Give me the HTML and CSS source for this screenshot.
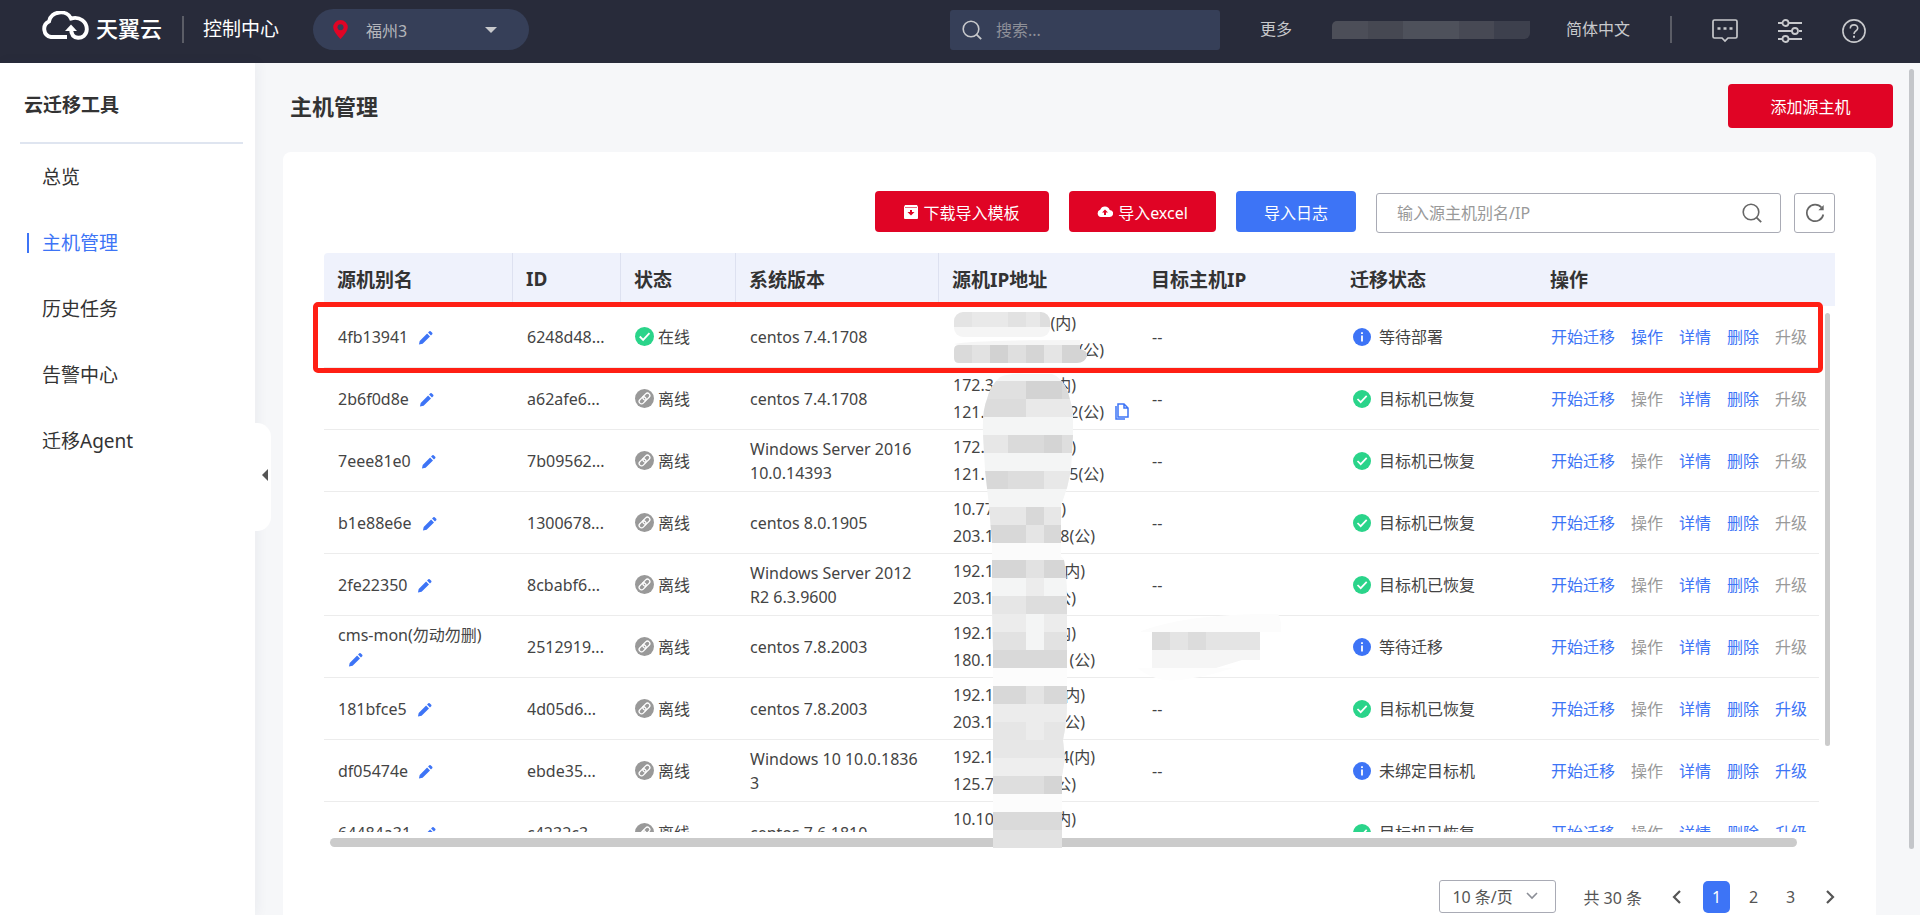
FILE: index.html
```
<!DOCTYPE html>
<html lang="zh-CN">
<head>
	<meta charset="utf-8">
	<title>主机管理</title>
	<meta name="viewport" content="width=device-width, initial-scale=1" />
	<link rel="stylesheet" href="styles.css">
</head>
<body>
	<svg class="sprite" aria-hidden="true">
		<symbol id="i-pencil" viewBox="0 0 16 16"><path d="M1 15l.8-3.9 7.900-7.900 3.100 3.100-7.900 7.900zM10.700 2.200l1.400-1.400q.7-.6 1.400 0l1.700 1.700q.6.7 0 1.400l-1.400 1.400z" fill="#3d74f6"/></symbol>
		<symbol id="i-ok" viewBox="0 0 18 18"><circle cx="9" cy="9" r="9" fill="#2ad48a"/><path d="M4.500 9l3.200 3.200 6-6.400" fill="none" stroke="#fff" stroke-width="1.700"/></symbol>
		<symbol id="i-info" viewBox="0 0 18 18"><circle cx="9" cy="9" r="9" fill="#3d74f6"/><path d="M9 4.200v1.800M9 7.400v6" stroke="#fff" stroke-width="1.800"/></symbol>
		<symbol id="i-off" viewBox="0 0 18 18"><circle cx="9" cy="9" r="9" fill="#999"/><g fill="none" stroke="#fff" stroke-width="1.200" transform="rotate(-45 9 9)"><rect x="2.800" y="6.700" width="7.400" height="4.600" rx="2.300"/><rect x="7.800" y="6.700" width="7.400" height="4.600" rx="2.300"/></g></symbol>
		<symbol id="i-search" viewBox="0 0 20 20"><circle cx="9" cy="9" r="7.800" fill="none" stroke="currentColor" stroke-width="1.600"/><path d="M14.600 14.600l4.600 4.600" stroke="currentColor" stroke-width="1.800"/></symbol>
	</svg>

	<header class="topbar">
		<a class="logo" href="#">
			<svg width="49" height="30" viewBox="0 0 49 30" aria-hidden="true"><path d="M27 26H11A8.200 8.200 0 0 1 9 10.500C11 -.5 27 -1.500 31 7.500C40 5 47 11 46.800 18.500C46.500 24.500 42 27 38 26.800C33 26.500 31 23 31 17" fill="none" stroke="#fff" stroke-width="3.900"/><path d="M25 20L31 13.500l6 6.500z" fill="#fff"/></svg>
			<span>天翼云</span>
		</a>
		<span class="divider"></span>
		<a class="console" href="#">控制中心</a>
		<button class="region" type="button">
			<svg width="15" height="19" viewBox="0 0 15 19" aria-hidden="true"><path d="M7.500 0a7.300 7.300 0 0 1 7.300 7.300C14.800 12 7.500 19 7.500 19S.2 12 .2 7.300A7.300 7.300 0 0 1 7.500 0z" fill="#e00425"/><circle cx="7.500" cy="7.300" r="3" fill="#363f58"/></svg>
			<span>福州3</span>
			<i class="caret"></i>
		</button>
		<div class="top-right">
			<label class="top-search">
				<svg width="20" height="20"><use href="#i-search"/></svg>
				<input type="text" placeholder="搜索..." aria-label="搜索">
			</label>
			<a class="text" href="#">更多</a>
			<span class="account"></span>
			<a class="text" href="#">简体中文</a>
			<span class="divider"></span>
			<a class="icon" href="#" aria-label="消息"><svg width="26" height="24" viewBox="0 0 26 24"><path d="M2.500 1h21q1.500 0 1.500 1.500v15q0 1.500-1.500 1.500H16l-3 3-3-3H2.500Q1 19 1 17.500v-15Q1 1 2.500 1z" fill="none" stroke="currentColor" stroke-width="1.700"/><path d="M5.500 9.500h3M11.500 9.500h3M17.500 9.500h3" stroke="currentColor" stroke-width="2.600"/></svg></a>
			<a class="icon" href="#" aria-label="设置"><svg width="24" height="24" viewBox="0 0 24 24"><g fill="none" stroke="currentColor" stroke-width="1.800"><path d="M0 4h4M11 4h13M0 12h14M21 12h3M0 20h4M11 20h13"/><circle cx="7.500" cy="4" r="3"/><circle cx="17" cy="12" r="3"/><circle cx="7.500" cy="20" r="3"/></g></svg></a>
			<a class="icon" href="#" aria-label="帮助"><svg width="24" height="24" viewBox="0 0 24 24"><g fill="none" stroke="currentColor" stroke-width="1.600"><circle cx="12" cy="12" r="11.100"/><path d="M8.300 9.500c0-5 7.500-4.700 7.400-.3 0 2.800-3.700 2.700-3.700 5.800"/><path d="M12 16.800v2" stroke-width="2"/></g></svg></a>
		</div>
	</header>

	<div class="page">
		<nav class="sidebar">
			<h2>云迁移工具</h2>
			<ul>
				<li><a href="#">总览</a></li>
				<li><a class="active" href="#">主机管理</a></li>
				<li><a href="#">历史任务</a></li>
				<li><a href="#">告警中心</a></li>
				<li><a href="#">迁移Agent</a></li>
			</ul>
			<button class="fold" type="button" aria-label="收起"><i></i></button>
		</nav>

		<main>
			<div class="title-row">
				<h1>主机管理</h1>
				<button class="btn btn-red btn-add" type="button">添加源主机</button>
			</div>

			<section class="card">
				<div class="toolbar">
					<button class="btn btn-red btn-tpl" type="button"><svg width="14" height="14" viewBox="0 0 14 14"><path d="M1 0h12l1 2v11q0 1-1 1H1q-1 0-1-1V2z" fill="#fff"/><path d="M1 2.500h12" stroke="#e00425" stroke-width=".6"/><path d="M6 5h2v2h2.500L7 10.500 3.500 7H6z" fill="#e00425"/></svg>下载导入模板</button>
					<button class="btn btn-red btn-excel" type="button"><svg width="16" height="11" viewBox="0 0 16 11"><path d="M4 11a3.700 3.700 0 0 1-.8-7.200A5 5 0 0 1 12.700 4 3.500 3.500 0 0 1 12.500 11z" fill="#fff"/><path d="M7 9V6.500H5L8 3.500l3 3H9V9z" fill="#e00425"/></svg>导入excel</button>
					<button class="btn btn-blue" type="button">导入日志</button>
					<label class="filter">
						<input type="text" placeholder="输入源主机别名/IP" aria-label="输入源主机别名/IP">
						<svg width="20" height="20"><use href="#i-search"/></svg>
					</label>
					<button class="refresh" type="button" aria-label="刷新"><svg width="20" height="20" viewBox="0 0 20 20"><path d="M16.500 4.500A8.300 8.300 0 1 0 18.300 11.500" fill="none" stroke="currentColor" stroke-width="1.700"/><path d="M18.700 2v5.300h-5.300z" fill="currentColor"/></svg></button>
				</div>

				<div class="table-area">
					<div class="table-clip">
						<table>
							<colgroup>
								<col class="c-name"><col class="c-id"><col class="c-state"><col class="c-os"><col class="c-ip"><col class="c-target"><col class="c-mig"><col class="c-ops"><col class="c-gutter">
							</colgroup>
							<thead>
								<tr><th class="sep">源机别名</th><th class="sep">ID</th><th class="sep">状态</th><th class="sep">系统版本</th><th>源机IP地址</th><th>目标主机IP</th><th>迁移状态</th><th>操作</th><th></th></tr>
							</thead>
							<tbody>
								<tr>
									<td>4fb13941<svg class="edit"><use href="#i-pencil"/></svg></td>
									<td>6248d48...</td>
									<td><span class="state on"><svg><use href="#i-ok"/></svg>在线</span></td>
									<td>centos 7.4.1708</td>
									<td><div class="ip d13"><i></i>(内)</div><div class="ip d16"><i></i>(公)</div></td>
									<td>--</td>
									<td><span class="mig"><svg><use href="#i-info"/></svg>等待部署</span></td>
									<td><div class="ops"><a href="#">开始迁移</a><a href="#">操作</a><a href="#">详情</a><a href="#">删除</a><a class="off">升级</a></div></td>
								</tr>
								<tr>
									<td>2b6f0d8e<svg class="edit"><use href="#i-pencil"/></svg></td>
									<td>a62afe6...</td>
									<td><span class="state"><svg><use href="#i-off"/></svg>离线</span></td>
									<td>centos 7.4.1708</td>
									<td><div class="ip d13"><span>172.3</span>(内)</div><div class="ip d16"><span>121.</span>2(公)<svg class="copy" viewBox="0 0 14 17"><path d="M3 1h6l4 4v9H3zM9 1v4h4M1 3v13h9" fill="none" stroke="#3d74f6" stroke-width="1.500"/></svg></div></td>
									<td>--</td>
									<td><span class="mig"><svg><use href="#i-ok"/></svg>目标机已恢复</span></td>
									<td><div class="ops"><a href="#">开始迁移</a><a class="off">操作</a><a href="#">详情</a><a href="#">删除</a><a class="off">升级</a></div></td>
								</tr>
								<tr>
									<td>7eee81e0<svg class="edit"><use href="#i-pencil"/></svg></td>
									<td>7b09562...</td>
									<td><span class="state"><svg><use href="#i-off"/></svg>离线</span></td>
									<td>Windows Server 2016 10.0.14393</td>
									<td><div class="ip d13"><span>172.</span>)</div><div class="ip d16"><span>121.</span>5(公)</div></td>
									<td>--</td>
									<td><span class="mig"><svg><use href="#i-ok"/></svg>目标机已恢复</span></td>
									<td><div class="ops"><a href="#">开始迁移</a><a class="off">操作</a><a href="#">详情</a><a href="#">删除</a><a class="off">升级</a></div></td>
								</tr>
								<tr>
									<td>b1e88e6e<svg class="edit"><use href="#i-pencil"/></svg></td>
									<td>1300678...</td>
									<td><span class="state"><svg><use href="#i-off"/></svg>离线</span></td>
									<td>centos 8.0.1905</td>
									<td><div class="ip d12"><span>10.77</span>)</div><div class="ip d15"><span>203.1</span>8(公)</div></td>
									<td>--</td>
									<td><span class="mig"><svg><use href="#i-ok"/></svg>目标机已恢复</span></td>
									<td><div class="ops"><a href="#">开始迁移</a><a class="off">操作</a><a href="#">详情</a><a href="#">删除</a><a class="off">升级</a></div></td>
								</tr>
								<tr>
									<td>2fe22350<svg class="edit"><use href="#i-pencil"/></svg></td>
									<td>8cbabf6...</td>
									<td><span class="state"><svg><use href="#i-off"/></svg>离线</span></td>
									<td>Windows Server 2012 R2 6.3.9600</td>
									<td><div class="ip d14"><span>192.1</span>内)</div><div class="ip d13"><span>203.1</span>公)</div></td>
									<td>--</td>
									<td><span class="mig"><svg><use href="#i-ok"/></svg>目标机已恢复</span></td>
									<td><div class="ops"><a href="#">开始迁移</a><a class="off">操作</a><a href="#">详情</a><a href="#">删除</a><a class="off">升级</a></div></td>
								</tr>
								<tr>
									<td>cms-mon(勿动勿删)<svg class="edit"><use href="#i-pencil"/></svg></td>
									<td>2512919...</td>
									<td><span class="state"><svg><use href="#i-off"/></svg>离线</span></td>
									<td>centos 7.8.2003</td>
									<td><div class="ip d13"><span>192.1</span>内)</div><div class="ip d15"><span>180.1</span>(公)</div></td>
									<td></td>
									<td><span class="mig"><svg><use href="#i-info"/></svg>等待迁移</span></td>
									<td><div class="ops"><a href="#">开始迁移</a><a class="off">操作</a><a href="#">详情</a><a href="#">删除</a><a class="off">升级</a></div></td>
								</tr>
								<tr>
									<td>181bfce5<svg class="edit"><use href="#i-pencil"/></svg></td>
									<td>4d05d6...</td>
									<td><span class="state"><svg><use href="#i-off"/></svg>离线</span></td>
									<td>centos 7.8.2003</td>
									<td><div class="ip d14"><span>192.1</span>内)</div><div class="ip d14"><span>203.1</span>公)</div></td>
									<td>--</td>
									<td><span class="mig"><svg><use href="#i-ok"/></svg>目标机已恢复</span></td>
									<td><div class="ops"><a href="#">开始迁移</a><a class="off">操作</a><a href="#">详情</a><a href="#">删除</a><a href="#">升级</a></div></td>
								</tr>
								<tr>
									<td>df05474e<svg class="edit"><use href="#i-pencil"/></svg></td>
									<td>ebde35...</td>
									<td><span class="state"><svg><use href="#i-off"/></svg>离线</span></td>
									<td>Windows 10 10.0.1836<br>3</td>
									<td><div class="ip d15"><span>192.1</span>4(内)</div><div class="ip d13"><span>125.7</span>公)</div></td>
									<td>--</td>
									<td><span class="mig"><svg><use href="#i-info"/></svg>未绑定目标机</span></td>
									<td><div class="ops"><a href="#">开始迁移</a><a class="off">操作</a><a href="#">详情</a><a href="#">删除</a><a href="#">升级</a></div></td>
								</tr>
								<tr>
									<td>64484a31<svg class="edit"><use href="#i-pencil"/></svg></td>
									<td>c4232c3...</td>
									<td><span class="state"><svg><use href="#i-off"/></svg>离线</span></td>
									<td>centos 7.6.1810</td>
									<td><div class="ip d13"><span>10.10</span>内)</div><div class="ip d13"></div></td>
									<td></td>
									<td><span class="mig"><svg><use href="#i-ok"/></svg>目标机已恢复</span></td>
									<td><div class="ops"><a href="#">开始迁移</a><a class="off">操作</a><a href="#">详情</a><a href="#">删除</a><a href="#">升级</a></div></td>
								</tr>
							</tbody>
						</table>
					</div>
					<div class="hbar"></div>
					<div class="vbar"></div>

					<!-- masked addresses, 18px blocks -->
					<svg class="mask" width="340" height="542" viewBox="0 0 340 542" aria-hidden="true">
						<clipPath id="row-a"><rect x="4" y="6" width="96" height="25" rx="9"/></clipPath>
						<clipPath id="row-b"><path d="M9 39H130V43Q138 45 137 50Q135 57 127 57H9Q4 57 4 52V44Q4 39 9 39z"/></clipPath>
						<clipPath id="strip"><path d="M50 71Q60 67 75 68H102Q112 71 118 86L123 105V130L121 164L117 182L111 200V251L114 254Q117 270 117 290V398Q117 415 113 434L115 452L112 470V542H43V344L42 300V236L39 200L35 164L33 128Q32 105 37 93Q40 80 50 71z"/></clipPath>
						<g clip-path="url(#row-a)">
							<path d="M0 3h22v18H0z" fill="#e4e4e4"/><path d="M22 3h36v18H22z" fill="#e9e9e9"/><path d="M58 3h18v18H58z" fill="#e2e2e2"/><path d="M76 3h14v18H76z" fill="#e8e8e8"/><path d="M90 3h14v18H90z" fill="#dedede"/><path d="M0 21h104v12H0z" fill="#f5f5f5"/>
						</g>
						<g clip-path="url(#row-b)">
							<path d="M0 39h22v20H0z" fill="#dadada"/><path d="M22 39h18v20H22z" fill="#e2e2e2"/><path d="M40 39h18v20H40z" fill="#d2d2d2"/><path d="M58 39h18v20H58z" fill="#dfdfdf"/><path d="M76 39h18v20H76z" fill="#d5d5d5"/><path d="M94 39h18v20H94z" fill="#e5e5e5"/><path d="M112 39h28v20h-28z" fill="#d4d4d4"/>
						</g>
						<path d="M4 38q20-4 126-4v5H9z" fill="#f5f5f5"/>
						<g clip-path="url(#strip)">
							<path d="M30 66h100v480H30z" fill="#f4f5f5"/>
							<path d="M30 75h28v18H30zM58 75h18v18H58z" fill="#e0e0e0"/><path d="M76 75h36v18H76z" fill="#d3d3d3"/><path d="M112 75h18v18h-18z" fill="#dadada"/>
							<path d="M30 93h46v18H30z" fill="#dcdcdc"/><path d="M76 93h54v18H76z" fill="#e9e9e9"/>
							<path d="M30 129h28v18H30z" fill="#e7e7e7"/><path d="M58 129h36v18H58z" fill="#dadada"/><path d="M94 129h18v18H94z" fill="#d4d4d4"/><path d="M112 129h18v18h-18z" fill="#dedede"/>
							<path d="M30 165h28v18H30z" fill="#d8d8d8"/><path d="M58 165h36v18H58z" fill="#dddddd"/><path d="M94 165h36v18H94z" fill="#e8e8e8"/>
							<path d="M30 201h28v18H30zM58 201h18v18H58zM94 201h36v18H94z" fill="#e7e7e7"/><path d="M76 201h18v18H76z" fill="#d8d8d8"/>
							<path d="M30 219h46v18H30zM94 219h36v18H94z" fill="#d8d8d8"/><path d="M76 219h18v18H76z" fill="#e5e5e5"/>
							<path d="M30 237h100v17H30z" fill="#fbfbfb"/>
							<path d="M30 254h46v18H30zM94 254h36v18H94z" fill="#d6d6d6"/><path d="M76 254h18v18H76z" fill="#e2e2e2"/>
							<path d="M76 272h18v18H76z" fill="#ececec"/>
							<path d="M30 290h46v18H30z" fill="#e6e6e6"/><path d="M76 290h54v18H76z" fill="#dddddd"/>
							<path d="M30 308h46v18H30zM94 308h36v18H94z" fill="#ececec"/><path d="M30 326h46v18H30zM94 326h36v18H94z" fill="#e2e2e2"/>
							<path d="M30 344h100v18H30z" fill="#d9d9d9"/><path d="M30 362h100v18H30z" fill="#fcfcfc"/>
							<path d="M30 380h46v18H30zM94 380h36v18H94z" fill="#d8d8d8"/><path d="M76 380h18v18H76z" fill="#e4e4e4"/>
							<path d="M30 398h100v18H30z" fill="#ececec"/><path d="M30 416h46v18H30zM94 416h36v18H94z" fill="#e6e6e6"/><path d="M76 416h18v18H76z" fill="#ececec"/>
							<path d="M30 434h100v18H30z" fill="#e7e7e7"/><path d="M30 452h100v18H30z" fill="#eeeeee"/>
							<path d="M30 470h64v18H30z" fill="#dedede"/><path d="M94 470h36v18H94z" fill="#d5d5d5"/>
							<path d="M30 488h100v18H30z" fill="#fcfcfc"/><path d="M30 506h100v18H30z" fill="#dadada"/><path d="M30 524h100v18H30z" fill="#e2e2e2"/>
						</g>
						<path d="M191 325Q240 307 328 308Q332 315 331 326H191z" fill="#fcfcfc"/>
						<path d="M188 362h95q-25 8-40 10-35 8-55-10z" fill="#fdfdfd"/>
						<path d="M202 326h108v18H202z" fill="#e4e4e4"/><path d="M202 326h18v18h-18zM238 326h18v18h-18z" fill="#dcdcdc"/><path d="M202 344h108v10H292l-26 8h-64z" fill="#f5f5f5"/>
					</svg>
					<div class="highlight"></div>
				</div>

				<div class="pager">
					<span class="size">
						<select aria-label="每页条数"><option>10 条/页</option></select>
						<svg width="12" height="8" viewBox="0 0 12 8"><path d="M1 1l5 5 5-5" fill="none" stroke="#8b8e96" stroke-width="1.600"/></svg>
					</span>
					<span class="total">共 30 条</span>
					<button class="arrow" type="button" aria-label="上一页"><svg width="9" height="14" viewBox="0 0 9 14"><path d="M8 1L2 7l6 6" fill="none" stroke="#555" stroke-width="2.200"/></svg></button>
					<button class="current" type="button">1</button>
					<button type="button">2</button>
					<button type="button">3</button>
					<button class="arrow" type="button" aria-label="下一页"><svg width="9" height="14" viewBox="0 0 9 14"><path d="M1 1l6 6-6 6" fill="none" stroke="#555" stroke-width="2.200"/></svg></button>
				</div>
			</section>
			<div class="page-bar"></div>
		</main>
	</div>
</body>
</html>
```
FILE: styles.css
```
* {
	box-sizing: border-box;
}

body {
	margin: 0;
	height: 100vh;
	padding-right: 2px;
	display: flex;
	flex-direction: column;
	overflow: hidden;
	font-family: "Noto Sans", "Noto Sans CJK SC", sans-serif;
	font-size: 16px;
	color: #444;
	background: #fff;
}

a {
	color: inherit;
	text-decoration: none;
}

button, input, select {
	font: inherit;
	color: inherit;
	border: 0;
	padding: 0;
	background: none;
}

svg {
	flex: none;
}

.sprite {
	position: absolute;
	width: 0;
	height: 0;
}

/* top bar */
.topbar {
	flex: none;
	height: 63px;
	display: flex;
	align-items: center;
	padding: 0 54px 4px 40px;
	background: #282b3a;
	color: #c8c9cc;
}

.logo {
	display: flex;
	align-items: center;
	gap: 7px;
	padding-bottom: 4px;
	color: #fff;
	font-size: 22px;
	font-weight: 500;
	line-height: 30px;
	margin-right: 20px;
}

.logo svg {
	margin-bottom: 4px;
}

.divider {
	width: 2px;
	height: 27px;
	background: #5b5d66;
}

.console {
	margin-left: 19px;
	padding-bottom: 4px;
	font-size: 19px;
	color: #fff;
}

.region {
	display: flex;
	align-items: center;
	width: 216px;
	height: 41px;
	margin-left: 34px;
	padding: 0 32px 0 20px;
	border-radius: 21px;
	background: #363f58;
	color: #b4b6bb;
}

.region span {
	margin-left: 18px;
	flex: 1;
	text-align: left;
}

.caret {
	border: 6px solid transparent;
	border-top-color: #c8c9cc;
	border-bottom: 0;
}

.top-right {
	display: flex;
	align-items: center;
	gap: 40px;
	margin-left: auto;
}

.top-right .text {
	padding-bottom: 4px;
}

.top-search {
	display: flex;
	align-items: center;
	gap: 14px;
	width: 270px;
	height: 40px;
	padding: 0 12px;
	border-radius: 3px;
	background: #363f58;
}

.top-search input {
	flex: 1;
	min-width: 0;
}

.top-search input::placeholder {
	color: #8e9098;
}

.account {
	width: 198px;
	height: 18px;
	margin-right: -4px;
	border-radius: 5px 0 6px 0;
	background: linear-gradient(90deg, #4c4e58 18%, #464852 18% 36%, #4e515b 36% 64%, #474954 64% 82%, #3d404d 82%);
}

.icon {
	padding-top: 2px;
}

.icon svg {
	display: block;
}

/* side menu */
.page {
	flex: 1;
	min-height: 0;
	display: flex;
}

.sidebar {
	position: relative;
	z-index: 1;
	flex: none;
	width: 255px;
	padding: 0 12px 0 20px;
	background: #fff;
	box-shadow: 2px 0 12px rgba(40, 50, 90, .06);
	color: #333;
}

.sidebar h2 {
	margin: 0;
	height: 81px;
	padding: 28px 4px 0;
	border-bottom: 2px solid #dfe5f0;
	font-size: 19px;
	line-height: 28px;
}

.sidebar ul {
	list-style: none;
	margin: 0;
	padding: 0 0 0 7px;
}

.sidebar li {
	height: 66px;
	display: flex;
	align-items: center;
}

.sidebar a {
	padding-left: 13px;
	border-left: 2px solid transparent;
	font-size: 19px;
	line-height: 20px;
}

.sidebar .active {
	color: #3d74f6;
	border-color: #3d74f6;
}

.fold {
	position: absolute;
	left: 100%;
	top: 360px;
	width: 16px;
	height: 108px;
	padding-bottom: 4px;
	border-radius: 0 14px 14px 0;
	background: #fff;
}

.fold i {
	display: block;
	margin-left: 7px;
	width: 0;
	border: 6px solid transparent;
	border-right-color: #555;
	border-left: 0;
}

/* content */
main {
	position: relative;
	flex: 1;
	min-width: 0;
	overflow: hidden;
	background: #f6f7f9;
}

.title-row {
	display: flex;
	align-items: center;
	justify-content: space-between;
	height: 89px;
	padding: 0 27px 3px 35px;
}

h1 {
	margin: 0;
	padding-bottom: 2px;
	font-size: 22px;
	color: #333;
}

.btn {
	display: flex;
	align-items: center;
	justify-content: center;
	gap: 5px;
	height: 41px;
	border-radius: 4px;
	color: #fff;
}

.btn-red {
	background: #e00425;
}

.btn-blue {
	width: 120px;
	background: #3d74f6;
}

.btn-add {
	width: 165px;
	height: 44px;
}

.btn-tpl {
	width: 174px;
}

.btn-excel {
	width: 147px;
}

.card {
	margin: 0 44px 0 28px;
	padding: 39px 41px 20px;
	border-radius: 8px;
	background: #fff;
}

.toolbar {
	display: flex;
	justify-content: flex-end;
	gap: 20px;
	height: 62px;
}

.filter {
	display: flex;
	align-items: center;
	width: 405px;
	height: 40px;
	margin: 2px -7px 0 0;
	padding: 0 18px 0 20px;
	border: 1px solid #a9abb5;
	border-radius: 3px;
	color: #666;
}

.filter input {
	flex: 1;
	min-width: 0;
}

.filter input::placeholder {
	color: #999;
}

.refresh {
	display: flex;
	align-items: center;
	justify-content: center;
	width: 41px;
	height: 40px;
	margin-top: 2px;
	border: 1px solid #a9abb5;
	border-radius: 3px;
	color: #666;
}

/* host table */
.table-area {
	position: relative;
}

.table-clip {
	height: 579px;
	overflow: hidden;
}

table {
	width: 100%;
	table-layout: fixed;
	border-collapse: separate;
	border-spacing: 0;
}

.c-name { width: 189px; }
.c-id { width: 108px; }
.c-state { width: 115px; }
.c-os { width: 203px; }
.c-ip { width: 199px; }
.c-target { width: 199px; }
.c-mig { width: 200px; }
.c-gutter { width: 16px; }

th {
	height: 53px;
	padding: 0 13px 2px;
	background: #eff2fc;
	color: #333;
	font-size: 19px;
	text-align: left;
}

th:first-child {
	border-radius: 4px 0 0 0;
}

.sep {
	border-right: 1px solid #dde1f0;
}

td {
	height: 62px;
	padding: 0 14px;
	border-bottom: 1px solid #ececec;
	line-height: 24px;
}

.edit {
	width: 15px;
	height: 16px;
	margin-left: 10px;
	vertical-align: -3px;
}

.state, .mig {
	display: flex;
	align-items: center;
	gap: 4px;
}

.state svg {
	width: 19px;
	height: 19px;
}

.mig {
	gap: 8px;
	padding-left: 2px;
	white-space: nowrap;
}

.mig svg {
	width: 18px;
	height: 18px;
}

.ip {
	position: relative;
	display: flex;
	justify-content: space-between;
	line-height: 27px;
	height: 27px;
}

/* width by number of digits in the address */
.d12 { width: 113px; }
.d13 { width: 123px; }
.d14 { width: 132px; }
.d15 { width: 142px; }
.d16 { width: 151px; }

.copy {
	position: absolute;
	left: 162px;
	top: 4px;
	width: 14px;
	height: 17px;
}

.ops {
	display: flex;
	gap: 16px;
	color: #3d74f6;
	white-space: nowrap;
}

.ops .off {
	color: #999;
}

.hbar {
	height: 9px;
	margin: 6px 38px 0 6px;
	border-radius: 5px;
	background: #cbcbcb;
}

.vbar {
	position: absolute;
	right: 5px;
	top: 60px;
	width: 5px;
	height: 433px;
	border-radius: 3px;
	background: #cbcbcb;
}

.mask {
	position: absolute;
	left: 626px;
	top: 53px;
}

.highlight {
	position: absolute;
	left: -11px;
	right: 12px;
	top: 49px;
	height: 71px;
	border: 5px solid #ff1f14;
	border-radius: 5px;
}

.page-bar {
	position: absolute;
	right: 6px;
	top: 6px;
	width: 5px;
	height: 780px;
	border-radius: 3px;
	background: #c4c6ca;
}

/* pagination */
.pager {
	display: flex;
	align-items: center;
	justify-content: flex-end;
	margin: 33px -9px 0 0;
	color: #555;
}

.pager button {
	display: flex;
	align-items: center;
	justify-content: center;
	width: 27px;
	height: 32px;
	margin-left: 10px;
	border-radius: 5px;
}

.pager .current {
	margin-left: 13px;
	background: #3d74f6;
	color: #fff;
}

.pager .arrow {
	margin-left: 13px;
}

.size {
	position: relative;
}

.size select {
	display: block;
	appearance: none;
	width: 117px;
	height: 33px;
	padding-left: 12px;
	border: 1px solid #a9abb5;
	border-radius: 3px;
}

.size svg {
	position: absolute;
	right: 18px;
	top: 12px;
}

.total {
	margin: 0 8px 0 27px;
}
```
